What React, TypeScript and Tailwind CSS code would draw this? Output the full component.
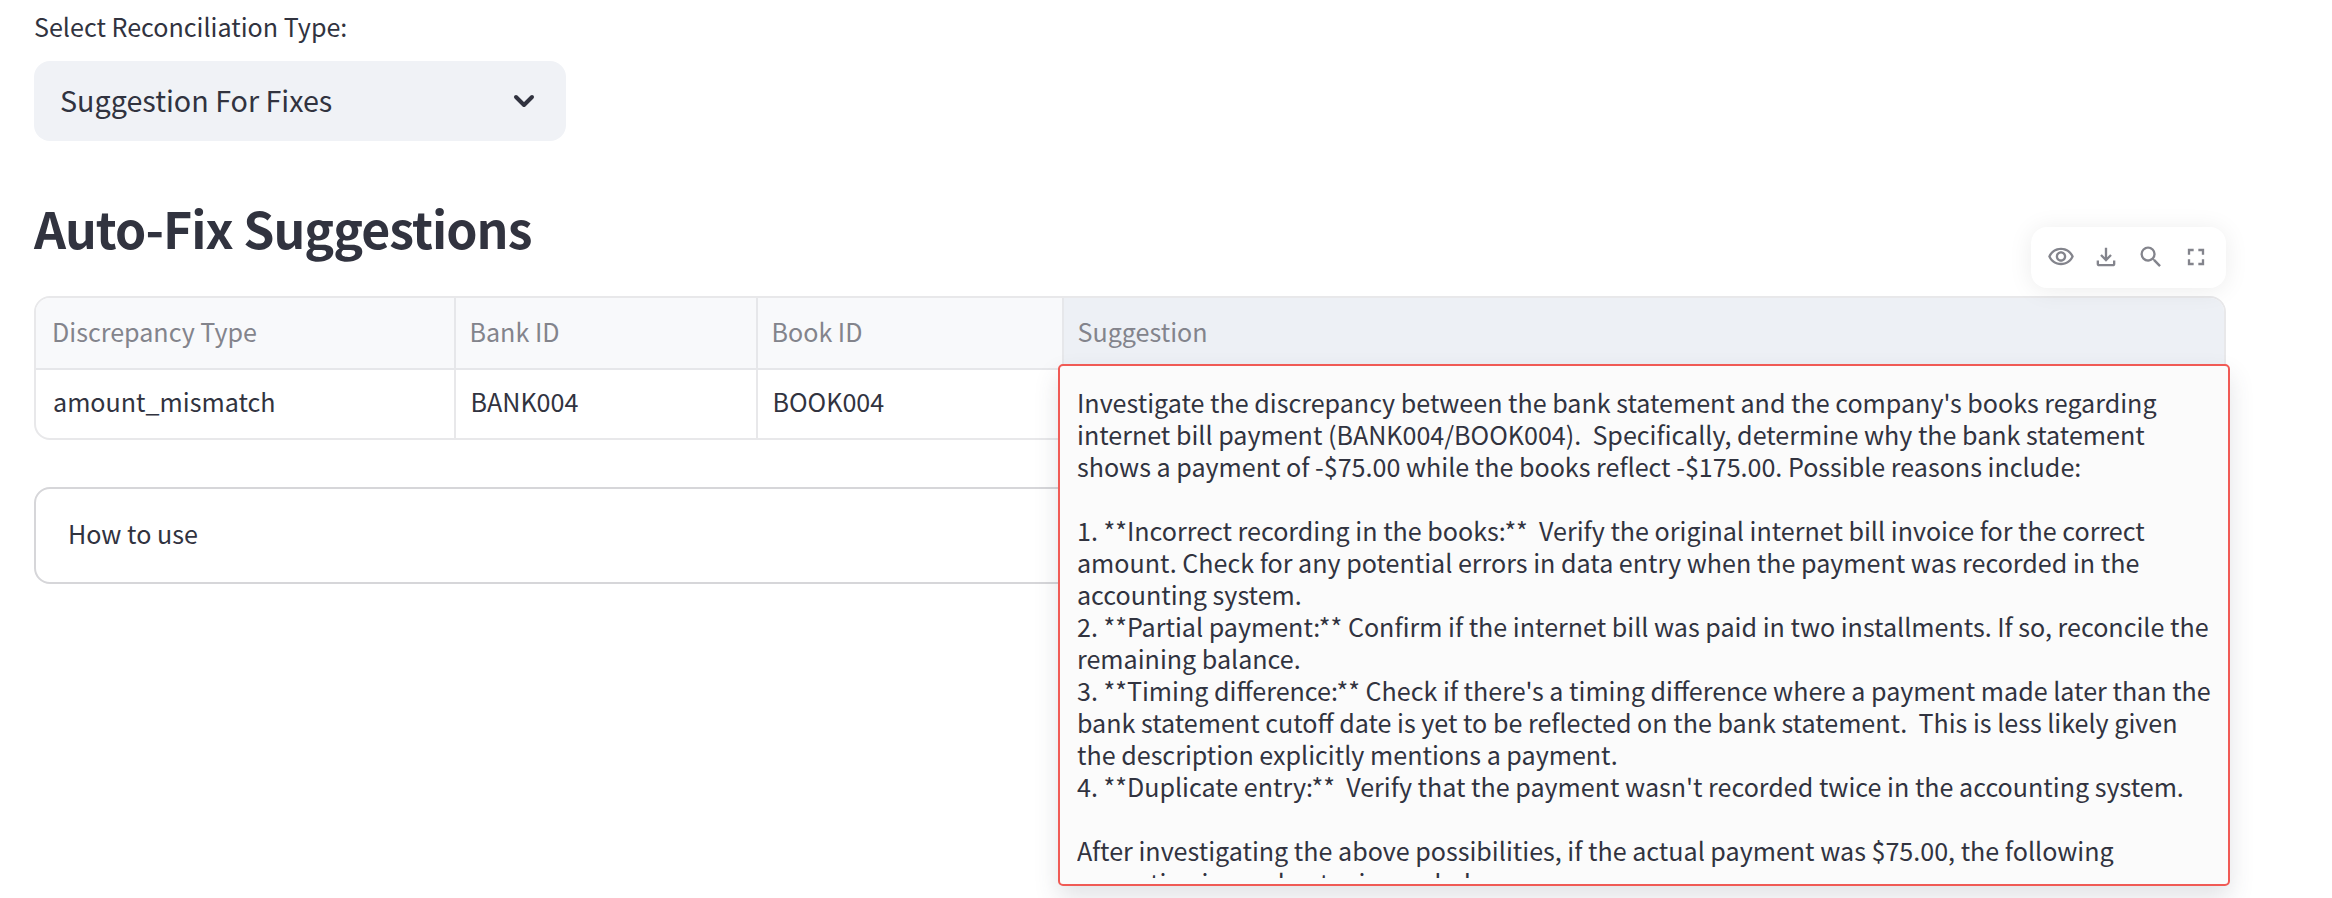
const FONT = "font-['Noto_Sans_CJK_SC',sans-serif]";

const columns = ['Discrepancy Type', 'Bank ID', 'Book ID', 'Suggestion'];
const row = ['amount_mismatch', 'BANK004', 'BOOK004', ''];

const suggestion = [
  "Investigate the discrepancy between the bank statement and the company's books regarding",
  'internet bill payment (BANK004/BOOK004).  Specifically, determine why the bank statement',
  'shows a payment of -$75.00 while the books reflect -$175.00. Possible reasons include:',
  '',
  '1. **Incorrect recording in the books:**  Verify the original internet bill invoice for the correct',
  'amount. Check for any potential errors in data entry when the payment was recorded in the',
  'accounting system.',
  '2. **Partial payment:** Confirm if the internet bill was paid in two installments. If so, reconcile the',
  'remaining balance.',
  "3. **Timing difference:** Check if there's a timing difference where a payment made later than the",
  'bank statement cutoff date is yet to be reflected on the bank statement.  This is less likely given',
  'the description explicitly mentions a payment.',
  "4. **Duplicate entry:**  Verify that the payment wasn't recorded twice in the accounting system.",
  '',
  'After investigating the above possibilities, if the actual payment was $75.00, the following',
  'correcting journal entry is needed:',
];

function Icon({ d }: { d: string }) {
  return (
    <svg viewBox="0 0 24 24" className="size-7 fill-[#83848c]">
      <path d={d} />
    </svg>
  );
}

function Toolbar() {
  return (
    <div className="absolute right-0 -top-[69px] flex h-[61px] w-[195px] items-center gap-[17px] rounded-2xl bg-white pb-px pl-4 shadow-[0_2px_24px_rgba(0,0,0,0.08)]">
      <Icon d="M12 6c3.79 0 7.17 2.13 8.82 5.5C19.17 14.87 15.79 17 12 17s-7.17-2.13-8.82-5.5C4.83 8.13 8.21 6 12 6m0-2C7 4 2.73 7.11 1 11.5 2.73 15.89 7 19 12 19s9.27-3.11 11-7.5C21.27 7.11 17 4 12 4zm0 5c1.38 0 2.5 1.12 2.5 2.5S13.38 14 12 14s-2.5-1.12-2.5-2.5S10.62 9 12 9m0-2c-2.48 0-4.5 2.02-4.5 4.5S9.52 16 12 16s4.5-2.02 4.5-4.5S14.48 7 12 7z" />
      <Icon d="M12 16l-5-5 1.4-1.45 2.6 2.6V4h2v8.15l2.6-2.6L17 11l-5 5zm-6 4q-.825 0-1.412-.587Q4 18.825 4 18v-3h2v3h12v-3h2v3q0 .825-.587 1.413Q18.825 20 18 20H6z" />
      <Icon d="M15.5 14h-.79l-.28-.27A6.471 6.471 0 0 0 16 9.5 6.5 6.5 0 1 0 9.5 16c1.61 0 3.09-.59 4.23-1.57l.27.28v.79l5 4.99L20.49 19l-4.99-5zm-6 0C7.01 14 5 11.99 5 9.5S7.01 5 9.5 5 14 7.01 14 9.5 11.99 14 9.5 14z" />
      <Icon d="M7 14H5v5h5v-2H7v-3zm-2-4h2V7h3V5H5v5zm12 7h-3v2h5v-5h-2v3zM14 5v2h3v3h2V5h-5z" />
    </div>
  );
}

export default function App() {
  return (
    <main className={`h-[898px] w-[2332px] overflow-hidden bg-white pl-[34px] text-[25.1px] text-[#31333f] ${FONT}`}>
      <div className="flex h-[61px] items-start pt-[8px] leading-9">Select Reconciliation Type:</div>
      <div className="flex h-20 w-[532px] items-center justify-between rounded-2xl bg-[#f0f2f6] pr-[31px] pl-[26px]">
        <span className="pb-[2px] text-[28.7px] leading-[44px]">Suggestion For Fixes</span>
        <svg viewBox="0 0 22 14" className="h-[14px] w-[22px] fill-none stroke-[#31333f] stroke-4">
          <path d="M3 3l8 8 8-8" strokeLinecap="round" strokeLinejoin="round" />
        </svg>
      </div>
      <h2 className="flex h-[155px] items-start pt-[50px] text-[50px] leading-[72px] font-bold tracking-[-0.95px]">
        Auto-Fix Suggestions
      </h2>

      <section className="relative h-36 w-[2192px]">
        <Toolbar />
        <div className="grid h-36 grid-cols-[420px_302px_306px_1fr] grid-rows-[72px_1fr] overflow-hidden rounded-2xl border-2 border-[#e8e8ea]">
          {columns.map((name, i) => (
            <div
              key={name}
              className={`flex items-center border-b-2 border-[#e6e7ea] pb-[2px] text-[#83848c] ${i === 0 ? 'pl-4' : 'pl-[13.5px]'} ${i < 3 ? 'border-r-2 bg-[#f8f9fb]' : 'bg-[#edf0f5]'}`}
            >
              {name}
            </div>
          ))}
          {row.map((value, i) => (
            <div
              key={i}
              className={`flex items-center border-[#e8e8ea] pb-1 ${i === 0 ? 'pl-[17px]' : 'pl-[14.5px]'} ${i < 3 ? 'border-r-2' : ''}`}
            >
              {value}
            </div>
          ))}
        </div>
        <div className="absolute top-[68px] left-[1024px] h-[522px] w-[1172px] rounded-[5px] border-2 border-[#f05a55] bg-[#fbfbfb] pt-5 pl-[17px] shadow-[0_12px_24px_rgba(62,65,86,0.15)]">
          <div className="h-[492px] overflow-hidden text-[25.08px] whitespace-pre">
            {suggestion.map((line, i) => (
              <div key={i} className="h-8 leading-8">
                {line}
              </div>
            ))}
          </div>
        </div>
      </section>

      <div className="mt-[47px] flex h-[97px] w-[2192px] items-center rounded-2xl border-2 border-[#d6d6d9] pb-[3px] pl-8">
        How to use
      </div>
    </main>
  );
}
